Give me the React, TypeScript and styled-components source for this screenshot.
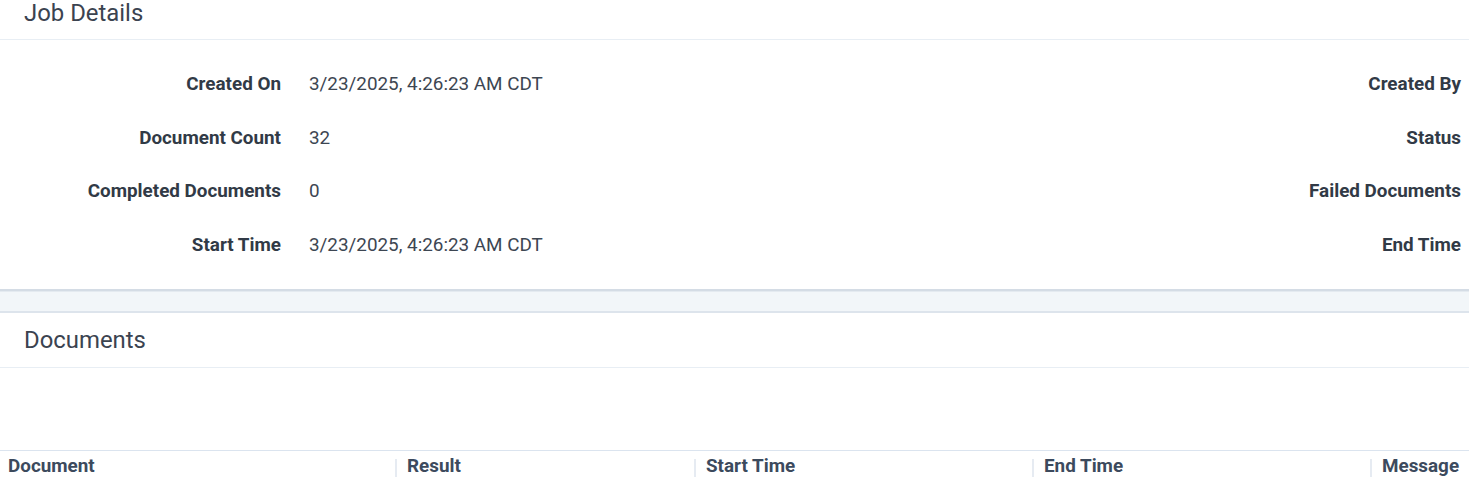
import React from "react";
import styled, { createGlobalStyle } from "styled-components";

const GlobalStyle = createGlobalStyle`
  html, body {
    margin: 0;
    padding: 0;
    background: #ffffff;
    font-family: Roboto, "Noto Sans", "Liberation Sans", sans-serif;
    -webkit-font-smoothing: antialiased;
  }
  * { box-sizing: border-box; }
`;

const Page = styled.div`
  display: flex;
  flex-direction: column;
  width: 100%;
`;

const Section = styled.section`
  display: flex;
  flex-direction: column;
  background: #ffffff;
`;

const SectionHeader = styled.div<{ $first?: boolean }>`
  padding: ${(p) => (p.$first ? "0 24px 13px" : "14px 24px 14px")};
  border-bottom: 1px solid #e8eef4;
`;

const SectionTitle = styled.h2`
  margin: 0;
  font-size: 23.9px;
  line-height: 26px;
  font-weight: 400;
  color: #3b4350;
`;

const DetailsGrid = styled.div`
  display: grid;
  grid-template-columns: 281px 1fr auto;
  column-gap: 28px;
  padding: 17.4px 8px 17px 0;
`;

const Label = styled.div`
  font-size: 18.85px;
  line-height: 22px;
  font-weight: 700;
  color: #313a46;
  text-align: right;
  padding: 15.8px 0;
  white-space: nowrap;
`;

const Value = styled.div`
  font-size: 18.85px;
  line-height: 22px;
  font-weight: 400;
  color: #3d4652;
  padding: 15.8px 0;
  white-space: nowrap;
`;

const Band = styled.div`
  height: 24px;
  background: #f2f6f9;
  border-top: 2px solid #d4dce5;
  border-bottom: 2px solid #dde4ec;
  box-shadow: inset 0 1px 0 #e4eaf0;
`;

const Toolbar = styled.div`
  height: 82px;
`;

const TableHead = styled.div`
  display: grid;
  grid-template-columns: 395px 299px 338px 338px 1fr;
  border-top: 1px solid #dbe4ef;
  padding-top: 1px;
`;

const HeadCell = styled.div<{ $first?: boolean }>`
  display: flex;
  align-items: center;
  gap: 10px;
  padding-left: ${(p) => (p.$first ? "8px" : "0")};
  font-size: 18.85px;
  line-height: 22px;
  font-weight: 700;
  color: #3c4a5d;
  white-space: nowrap;
  height: 28px;
`;

const Divider = styled.span`
  width: 2px;
  height: 18px;
  margin-top: 4px;
  background: #e6ebf2;
  flex: none;
`;

const details: [string, string, string][] = [
  ["Created On", "3/23/2025, 4:26:23 AM CDT", "Created By"],
  ["Document Count", "32", "Status"],
  ["Completed Documents", "0", "Failed Documents"],
  ["Start Time", "3/23/2025, 4:26:23 AM CDT", "End Time"],
];

const columns = ["Document", "Result", "Start Time", "End Time", "Message"];

export default function App() {
  return (
    <Page>
      <GlobalStyle />
      <Section>
        <SectionHeader $first>
          <SectionTitle>Job Details</SectionTitle>
        </SectionHeader>
        <DetailsGrid>
          {details.map(([l, v, r]) => (
            <React.Fragment key={l}>
              <Label>{l}</Label>
              <Value>{v}</Value>
              <Label>{r}</Label>
            </React.Fragment>
          ))}
        </DetailsGrid>
      </Section>
      <Band />
      <Section>
        <SectionHeader>
          <SectionTitle>Documents</SectionTitle>
        </SectionHeader>
        <Toolbar />
        <TableHead>
          {columns.map((c, i) => (
            <HeadCell key={c} $first={i === 0}>
              {i > 0 && <Divider />}
              {c}
            </HeadCell>
          ))}
        </TableHead>
      </Section>
    </Page>
  );
}
